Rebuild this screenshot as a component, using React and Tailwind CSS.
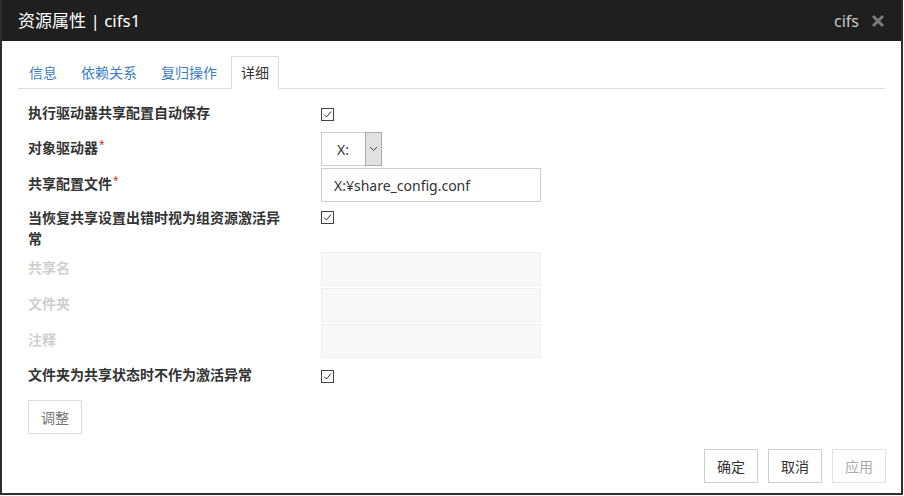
import React from "react";

const FONT = { fontFamily: "'Noto Sans', 'Noto Sans CJK SC', sans-serif" };

function Check() {
  return (
    <span className="inline-flex h-[13px] w-[13px] items-center justify-center border border-[#444] bg-white">
      <svg width="11" height="11" viewBox="0 0 11 11">
        <path d="M2 5.5 L4.5 8 L9 2.5" fill="none" stroke="#333" strokeWidth="1" />
      </svg>
    </span>
  );
}

function Label({ children, req, disabled, className = "pb-[3px]" }) {
  return (
    <div
      className={`w-[262px] shrink-0 text-[14px] leading-[21px] ${
        disabled ? "font-bold text-[#d0d0d0]" : "font-bold text-[#333]"
      } ${className}`}
    >
      {children}
      {req && <sup className="ml-[1px] text-[10px] font-normal text-[#c9302c]">*</sup>}
    </div>
  );
}

export default function App() {
  return (
    <div style={FONT} className="w-[904px] h-[496px] bg-white">
      <div className="flex h-[495px] w-[903px] flex-col border-2 border-t-0 border-[#2e2e2e]">
        {/* header */}
        <div className="flex h-[41px] shrink-0 items-center bg-[#1f1f1f] pl-[16px] pr-[16px]">
          <div className="text-[17px] text-white">资源属性 | cifs1</div>
          <div className="ml-auto text-[16px] text-[#c8c8c8]">cifs</div>
          <svg className="ml-[12px]" width="14" height="14" viewBox="0 0 14 14">
            <path d="M2 2 L12 12 M12 2 L2 12" stroke="#7a7a7a" strokeWidth="3" />
          </svg>
        </div>

        {/* tabs */}
        <div className="mx-[16px] mt-[16px] flex h-[32px] items-end gap-[4px] border-b border-[#dcdcdc] pl-[1px]">
          <div className="flex h-[31px] items-center px-[10px] text-[14px] text-[#3b7dc1]">信息</div>
          <div className="flex h-[31px] items-center px-[10px] text-[14px] text-[#3b7dc1]">依赖关系</div>
          <div className="flex h-[31px] items-center px-[10px] text-[14px] text-[#3b7dc1]">复归操作</div>
          <div className="-mb-px flex h-[33px] items-center border border-b-white border-[#dcdcdc] bg-white px-[9px] text-[14px] text-[#333]">
            详细
          </div>
        </div>

        {/* form */}
        <div className="px-[26px] pt-[12px]">
          <div className="flex h-[26px] items-center">
            <Label>执行驱动器共享配置自动保存</Label>
            <div className="ml-[31px] flex items-center">
              <Check />
            </div>
          </div>

          <div className="mt-[5px] flex h-[34px] items-center">
            <Label req>对象驱动器</Label>
            <div className="ml-[31px] flex h-[34px] w-[61px] border border-[#ccc] bg-white">
              <div className="flex flex-1 items-center pl-[15px] text-[14px] text-[#333]">X:</div>
              <div className="m-[-1px] flex w-[17px] items-center justify-center border border-[#a9a9a9] bg-[#e1e1e1]">
                <svg width="9" height="6" viewBox="0 0 9 6">
                  <path d="M1 1 L4.5 4.5 L8 1" fill="none" stroke="#444" strokeWidth="1" />
                </svg>
              </div>
            </div>
          </div>

          <div className="mt-[2px] flex h-[34px] items-center">
            <Label req>共享配置文件</Label>
            <div className="ml-[31px] flex h-[34px] w-[220px] items-center border border-[#ccc] bg-white pl-[12px] text-[14px] text-[#333]">
              X:¥share_config.conf
            </div>
          </div>

          <div className="mt-[5px] flex h-[42px] items-start">
            <Label className="pt-0">当恢复共享设置出错时视为组资源激活异常</Label>
            <div className="ml-[31px] mt-[4px] flex items-center">
              <Check />
            </div>
          </div>

          <div className="mt-[3px] flex h-[34px] items-center">
            <Label disabled>共享名</Label>
            <div className="ml-[31px] h-[34px] w-[220px] border border-[#eeeeee] bg-[#f8f8f8]" />
          </div>
          <div className="mt-[2px] flex h-[34px] items-center">
            <Label disabled>文件夹</Label>
            <div className="ml-[31px] h-[34px] w-[220px] border border-[#eeeeee] bg-[#f8f8f8]" />
          </div>
          <div className="mt-[2px] flex h-[34px] items-center">
            <Label disabled>注释</Label>
            <div className="ml-[31px] h-[34px] w-[220px] border border-[#eeeeee] bg-[#f8f8f8]" />
          </div>

          <div className="mt-[5px] flex h-[26px] items-center">
            <Label>文件夹为共享状态时不作为激活异常</Label>
            <div className="ml-[31px] flex items-center">
              <Check />
            </div>
          </div>

          <div className="mt-[11px] flex">
            <button className="flex h-[34px] w-[54px] items-center justify-center border border-[#dcdcdc] bg-white text-[14px] text-[#777]">
              调整
            </button>
          </div>
        </div>

        {/* footer */}
        <div className="mt-[15px] flex justify-end gap-[10px] pr-[15px]">
          <button className="flex h-[34px] w-[54px] items-center justify-center border border-[#cfcfcf] bg-white text-[14px] text-[#333]">
            确定
          </button>
          <button className="flex h-[34px] w-[54px] items-center justify-center border border-[#cfcfcf] bg-white text-[14px] text-[#333]">
            取消
          </button>
          <button className="flex h-[34px] w-[54px] items-center justify-center border border-[#e3e3e3] bg-white text-[14px] text-[#aaa]">
            应用
          </button>
        </div>
      </div>
    </div>
  );
}
